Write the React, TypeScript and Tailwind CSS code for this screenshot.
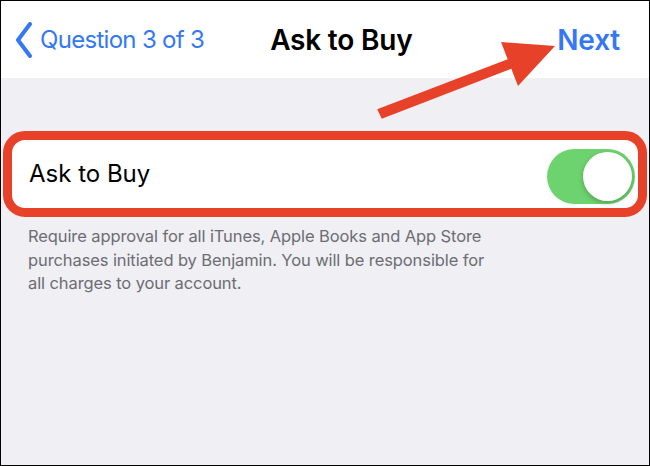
export default function App() {
  return (
    <div className="w-[650px] h-[466px] border border-black bg-[#efeff4] flex flex-col relative overflow-hidden font-['Inter',sans-serif]">
      {/* Nav bar */}
      <div className="h-[77px] bg-white flex items-center pl-[14px] pr-[29px] shrink-0">
        <svg width="20" height="36" viewBox="0 0 20 36" className="shrink-0">
          <polyline points="15,2 3,18 15,34" fill="none" stroke="#3478f6" strokeWidth="4" strokeLinecap="round" strokeLinejoin="round" />
        </svg>
        <span className="ml-[5px] text-[24px] text-[#3478f6] tracking-[-0.7px]">Question 3 of 3</span>
        <span className="ml-[66px] text-[28px] font-semibold text-black tracking-[-0.2px]">Ask to Buy</span>
        <span className="ml-auto text-[28px] font-semibold text-[#3478f6] tracking-[-0.2px]">Next</span>
      </div>

      {/* Highlighted row */}
      <div className="mt-[53px] mx-[2px] h-[86px] border-[9px] border-[#e8412a] rounded-[22px] bg-white flex items-center pl-[17px] pr-[3px]">
        <span className="text-[24px] text-black">Ask to Buy</span>
        <div className="ml-auto mt-[4px] w-[88px] h-[55px] rounded-full bg-[#6dd36e] p-[3px] flex justify-end">
          <div className="w-[49px] h-[49px] rounded-full bg-white shadow-[0_2px_5px_rgba(0,0,0,0.25)]" />
        </div>
      </div>

      <p className="mt-[8px] ml-[27px] w-[466px] text-[16.5px] leading-[23.5px] text-[#6d6d72] tracking-[-0.1px]">
        Require approval for all iTunes, Apple Books and App Store purchases initiated by Benjamin. You will be responsible for all charges to your account.
      </p>

      {/* Annotation arrow */}
      <svg className="absolute left-0 top-0 pointer-events-none" width="650" height="466" viewBox="0 0 650 466">
        <polygon
          points="376.2,108.3 506.7,58.3 500,41 554,45 517,85 510.3,67.7 380.8,117.7"
          fill="#e8412a"
        />
      </svg>
    </div>
  )
}
